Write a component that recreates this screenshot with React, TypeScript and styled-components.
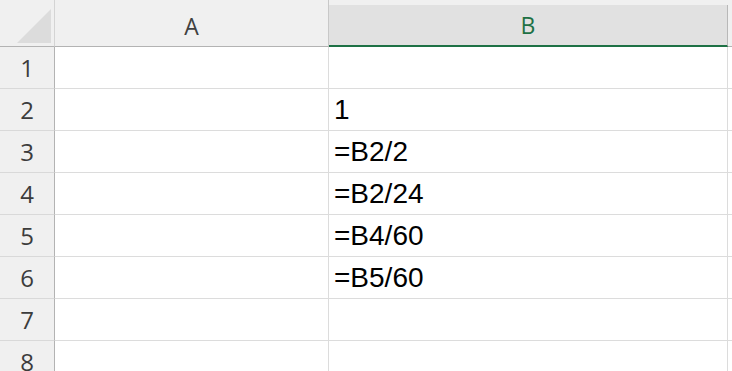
import React from "react";
import styled, { createGlobalStyle } from "styled-components";

const Global = createGlobalStyle`
  html, body { margin: 0; padding: 0; background: #ffffff; overflow: hidden; }
  * { box-sizing: border-box; }
`;

const Sheet = styled.div`
  width: 732px;
  height: 371px;
  overflow: hidden;
  display: flex;
  flex-direction: column;
  background: #ffffff;
`;

const HeaderRow = styled.div`
  display: flex;
  height: 47px;
  flex: none;
  background: #f0f0f0;
`;

const Corner = styled.div`
  width: 55px;
  height: 47px;
  display: flex;
  align-items: flex-end;
  justify-content: flex-end;
  padding: 0 3px 3px 0;
  border-right: 1px solid #d4d4d4;
  border-bottom: 1px solid #b3b3b3;
`;

const Triangle = styled.div`
  width: 0;
  height: 0;
  border-left: 34px solid transparent;
  border-bottom: 34px solid #dcdcdc;
`;

const ColHeader = styled.div<{ $w?: number; $selected?: boolean }>`
  ${(p) => (p.$w ? `width: ${p.$w}px; flex: none;` : "flex: 1;")}
  display: flex;
  align-items: center;
  justify-content: center;
  font-family: "Open Sans", "Noto Sans", sans-serif;
  font-size: 23px;
  color: ${(p) => (p.$selected ? "#1e7145" : "#404040")};
  background: ${(p) => (p.$selected ? "#e1e1e1" : "#f0f0f0")};
  margin-top: ${(p) => (p.$selected ? "5px" : "0")};
  height: ${(p) => (p.$selected ? "42px" : "47px")};
  border-right: 1px solid ${(p) => (p.$selected ? "#b8b8b8" : "#c8c8c8")};
  border-bottom: ${(p) => (p.$selected ? "2px solid #1e7145" : "1px solid #b3b3b3")};
  padding-top: ${(p) => (p.$selected ? "0" : "5px")};
  ${(p) => (p.$w ? "" : "border-right: none;")}
`;

const Row = styled.div`
  display: flex;
  height: 42px;
  flex: none;
`;

const RowHeader = styled.div`
  width: 55px;
  flex: none;
  display: flex;
  align-items: center;
  justify-content: center;
  background: #f0f0f0;
  border-right: 1px solid #b3b3b3;
  border-bottom: 1px solid #d9d9d9;
  font-family: "Open Sans", "Noto Sans", sans-serif;
  font-size: 24px;
  color: #3c3c3c;
`;

const Cell = styled.div<{ $w?: number }>`
  ${(p) => (p.$w ? `width: ${p.$w}px; flex: none;` : "flex: 1;")}
  border-right: 1px solid #dcdcdc;
  border-bottom: 1px solid #dcdcdc;
  padding-left: 5px;
  font-family: "Liberation Sans", Arial, sans-serif;
  font-size: 28px;
  line-height: 41px;
  color: #000000;
  white-space: nowrap;
  overflow: hidden;
`;

const data: string[] = ["", "1", "=B2/2", "=B2/24", "=B4/60", "=B5/60", "", ""];

export default function App() {
  return (
    <>
      <Global />
      <Sheet>
        <HeaderRow>
          <Corner>
            <Triangle />
          </Corner>
          <ColHeader $w={274}>A</ColHeader>
          <ColHeader $w={399} $selected>
            B
          </ColHeader>
          <ColHeader />
        </HeaderRow>
        {data.map((v, i) => (
          <Row key={i}>
            <RowHeader>{i + 1}</RowHeader>
            <Cell $w={274} />
            <Cell $w={399}>{v}</Cell>
            <Cell />
          </Row>
        ))}
      </Sheet>
    </>
  );
}
